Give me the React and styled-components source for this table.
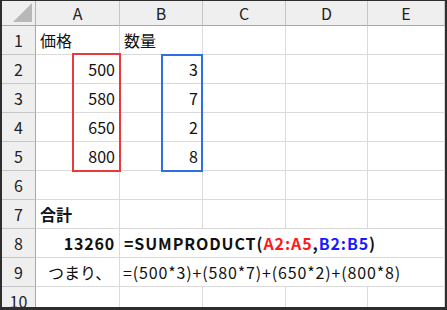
import React from "react";
import styled, { createGlobalStyle } from "styled-components";

const GlobalStyle = createGlobalStyle`
  body {
    margin: 0;
    background: #ffffff;
  }
`;

const Frame = styled.div`
  position: relative;
  width: 447px;
  height: 310px;
  box-sizing: border-box;
  border-style: solid;
  border-color: #2e2e2e;
  border-width: 1px 2px 3px 2px;
  overflow: hidden;
  background: #fff;
  font-family: "Noto Sans CJK JP", "Noto Sans", sans-serif;
  color: #111;
`;

const Sheet = styled.div`
  display: grid;
  grid-template-columns: 34px 84px 83px 83px 82px 1fr;
  grid-template-rows: 25px repeat(10, 29px);
`;

const Corner = styled.div`
  background: #efefef;
  border-right: 1px solid #b4b4b4;
  border-bottom: 1px solid #a8a8a8;
  & svg {
    display: block;
  }
`;

const ColHeader = styled.div`
  background: #efefef;
  border-right: 1px solid #c6c6c6;
  border-bottom: 1px solid #a8a8a8;
  display: flex;
  align-items: center;
  justify-content: center;
  font-size: 16px;
  color: #222;
`;

const RowHeader = styled.div`
  background: #efefef;
  border-right: 1px solid #a8a8a8;
  border-bottom: 1px solid #c6c6c6;
  display: flex;
  align-items: center;
  justify-content: center;
  font-size: 16px;
  color: #222;
`;

const Cell = styled.div`
  grid-column: ${(p) => (p.$span ? `span ${p.$span}` : "auto")};
  border-right: 1px solid #dadada;
  border-bottom: 1px solid #dadada;
  display: flex;
  align-items: center;
  justify-content: ${(p) => (p.$right ? "flex-end" : "flex-start")};
  padding: 0 4px 0 ${(p) => p.$indent || 4}px;
  font-size: 16px;
  font-weight: ${(p) => (p.$bold ? 700 : 400)};
  letter-spacing: ${(p) => p.$track || 0}px;
  white-space: nowrap;
  overflow: visible;
`;

const Ref = styled.span`
  color: ${(p) => p.$color};
`;

const RangeBox = styled.div`
  position: absolute;
  left: ${(p) => p.$left}px;
  top: ${(p) => p.$top}px;
  width: ${(p) => p.$w}px;
  height: ${(p) => p.$h}px;
  box-sizing: border-box;
  border: 2px solid ${(p) => p.$color};
  pointer-events: none;
`;

const cols = ["A", "B", "C", "D", "E"];

const rows = [
  ["価格", "数量"],
  ["500", "3"],
  ["580", "7"],
  ["650", "2"],
  ["800", "8"],
  [],
];

const App = () => {
  return (
    <>
      <GlobalStyle />
      <Frame>
        <Sheet>
          <Corner>
            <svg width="33" height="24">
              <polygon points="30,2 30,21 11,21" fill="#b8b8b8" />
            </svg>
          </Corner>
          {cols.map((c) => (
            <ColHeader key={c}>{c}</ColHeader>
          ))}

          {rows.map((r, i) => (
            <React.Fragment key={i}>
              <RowHeader>{i + 1}</RowHeader>
              <Cell $right={i > 0}>{r[0]}</Cell>
              <Cell $right={i > 0}>{r[1]}</Cell>
              <Cell />
              <Cell />
              <Cell />
            </React.Fragment>
          ))}

          <RowHeader>7</RowHeader>
          <Cell $bold>合計</Cell>
          <Cell />
          <Cell />
          <Cell />
          <Cell />

          <RowHeader>8</RowHeader>
          <Cell $right $bold $track={0.8}>13260</Cell>
          <Cell $span={4} $bold $track={0.9}>
            =SUMPRODUCT(<Ref $color="#ff1a1a">A2:A5</Ref>,<Ref $color="#1a1aff">B2:B5</Ref>)
          </Cell>

          <RowHeader>9</RowHeader>
          <Cell $indent={12}>つまり、</Cell>
          <Cell $span={4} $indent={3} $track={0.85}>=(500*3)+(580*7)+(650*2)+(800*8)</Cell>

          <RowHeader>10</RowHeader>
          <Cell />
          <Cell />
          <Cell />
          <Cell />
          <Cell />
        </Sheet>

        <RangeBox $left={70} $top={52} $w={49} $h={119} $color="#e8393d" />
        <RangeBox $left={159} $top={53} $w={42} $h={118} $color="#2f6fe6" />
      </Frame>
    </>
  );
};

export default App;
